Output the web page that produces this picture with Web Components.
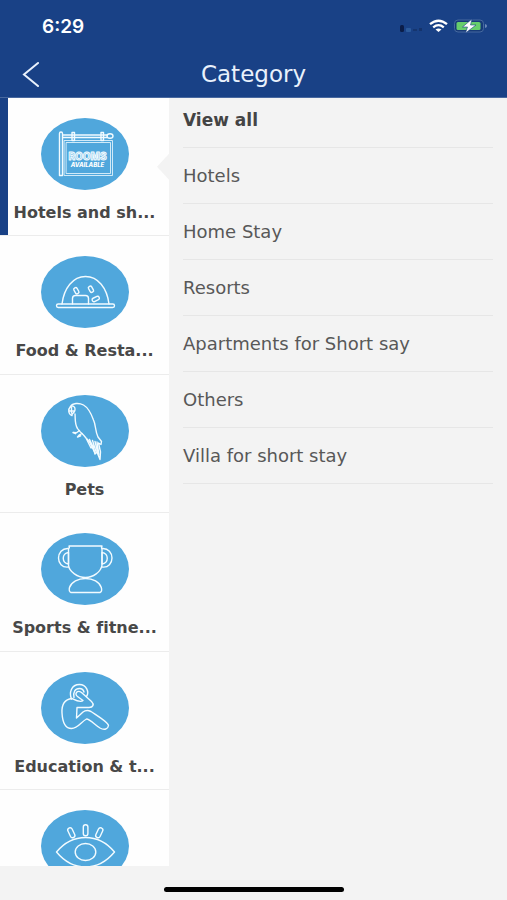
<!DOCTYPE html>
<html lang="en">
<head>
  <meta charset="utf-8">
  <meta name="viewport" content="width=device-width, initial-scale=1">
  <title>Category</title>
  <style>
    body {
      margin: 0;
      font-family: "DejaVu Sans", Verdana, sans-serif;
      font-variant-ligatures: none;
      color: #4a4a4a;
    }
  </style>
</head>
<body>
  <category-screen>
    <status-bar slot="header" time="6:29"></status-bar>
    <title-bar slot="header">Category</title-bar>

    <category-item slot="categories" icon="rooms" selected>Hotels and sh...</category-item>
    <category-item slot="categories" icon="food">Food &amp; Resta...</category-item>
    <category-item slot="categories" icon="parrot">Pets</category-item>
    <category-item slot="categories" icon="trophy">Sports &amp; fitne...</category-item>
    <category-item slot="categories" icon="person">Education &amp; t...</category-item>
    <category-item slot="categories" icon="eye" label="Eye care"></category-item>

    <sub-item strong>View all</sub-item>
    <sub-item>Hotels</sub-item>
    <sub-item>Home Stay</sub-item>
    <sub-item>Resorts</sub-item>
    <sub-item>Apartments for Short say</sub-item>
    <sub-item>Others</sub-item>
    <sub-item>Villa for short stay</sub-item>
  </category-screen>

  <script>
    'use strict';

    // line drawings, all on the same 88x72 oval
    const ICONS = {
      rooms: `
        <path d="M18.5 57.5V15.5a1.5 1.5 0 0 1 3 0V57.5zM21.5 17H66M21.5 19.5H66"/>
        <ellipse cx="69" cy="18" rx="3" ry="2.2"/>
        <path d="M31 14.5h2.5v8H31zM60 14.5h2.5v8H60z"/>
        <path d="M23.5 22.5h48v35h-48zM25.5 24.500h44v31h-44z" stroke-width=".8"/>
        <text x="46.5" y="42" font-family="Inter, sans-serif" font-size="10" font-weight="800" text-anchor="middle" fill="#8cc8ea" stroke-width=".9">ROOMS</text>
        <text x="46.5" y="49" font-family="Inter, sans-serif" font-size="6" font-weight="800" font-style="italic" text-anchor="middle" fill="#fff" stroke="none">AVAILABLE</text>`,
      food: `
        <path d="M21 48C23 32 32 20.5 44.5 20.5S66 32 68 48"/>
        <rect x="15.5" y="48" width="58" height="3.5" rx="1.7"/>
        <path d="M31.5 48v-5.5q0-3 3-3h10q3 0 3 3V48"/>
        <rect x="33.5" y="31.5" width="3.6" height="6.5" rx="1.6" transform="rotate(-30 35.3 34.7)"/>
        <rect x="48.2" y="30" width="3.6" height="6.5" rx="1.6" transform="rotate(-30 50 33.3)"/>
        <rect x="52.9" y="39.2" width="3.6" height="7.5" rx="1.6" transform="rotate(65 54.7 43)"/>`,
      parrot: `
        <path d="M34 19C34.5 24 33.5 29 36.5 33.5C39 37.5 42 39 45 43L50 53L52 51L54 59L56 57L59 64.5L59.5 57L57.5 48L60 49.5L60.5 46.5L57 42C54 36 55 30 52.5 25C50 18 46 12 42.5 10C38 7.5 31.5 8 29.5 11.5"/>
        <path d="M29.5 11.5C26.5 14.5 27.5 19.5 31 20.5C30.5 18 33.5 18.5 34 15C34.5 12 32 10 29.5 11.5zM28.5 16h4.5M30.5 12v6"/>
        <path d="M38.5 35.5l-3 2.3-3.5-.3 2.5 1.2M41 38.5l-2.5 1.3-2 2.2 3.2-1.2"/>
        <path d="M46 44l6 7.5M48.5 44.5l4 8M51.5 45.5l3.5 11M54 46.5l3 12M56 47l2 13M49 48l5 10"/>`,
      trophy: `
        <path d="M28 13H61q-1 1.5 0 3V32C60 39 52 44.5 44.5 44.5S28 39 27.5 32V16q1.5-1.5.5-3z"/>
        <path d="M27.5 15.5C21 15 17.5 20 17.5 25S21 35 27.5 34M61 15.5c6.5-.5 10 4.5 10 9.5S67.5 35 61 34"/>
        <path d="M27.5 19.5c-7 .5-7 11 0 11.5zM61 19.5c7 .5 7 11 0 11.5z"/>
        <path d="M30 59.5q-2.5-1-1.5-5C30.5 49 37 45.5 44.5 45.5S58.5 49 60.3 54.5q1.2 4-1.3 5z"/>`,
      person: `
        <path d="M30.5 27C28 21 30 12.5 38.5 12.5C45.5 12.5 48.5 20 45.5 24.5"/>
        <path d="M31 26.5C23 27.5 20.5 33 21 41C21.5 50 24.5 56.5 30.5 56.5C37 56.5 40 50 45.5 47C49 47 54 53 59 56C63.5 58.5 67 57 67.5 53.5C67 50 55 43 50 39.5C47 38 44 38.5 42 40L35.5 46L36 35.5H48C52 35.5 53.5 32.5 50.5 29.5L40.5 20.5C36 17.5 33 22 36.5 24.5L42 28.5C39.5 31 35 28.5 31 26.5z"/>
        <path d="M33 25.5C32 20 34 16.5 38.5 16.5C41 16.5 42.5 18 43 20"/>`,
      eye: `
        <path d="M15.5 42C23 33 32 27.5 44.5 27.5S66 33 73.5 42C66 51 57 57 44.5 57S23 51 15.5 42z"/>
        <ellipse cx="44.5" cy="42" rx="10.3" ry="8.5"/>
        <rect x="28" y="17.5" width="4.6" height="10.5" rx="2.2" transform="rotate(-25 30.3 22.7)"/>
        <rect x="42.3" y="14.7" width="4.6" height="11" rx="2.2"/>
        <rect x="56" y="17.5" width="4.6" height="10.5" rx="2.2" transform="rotate(25 58.3 22.7)"/>`
    };

    class CategoryScreen extends HTMLElement {
      constructor() {
        super();
        this.attachShadow({ mode: 'open' });
        this.shadowRoot.innerHTML = `
          <style>
            :host {
              display: flex;
              flex-direction: column;
              height: 100vh;
              background: #f3f3f3;
            }

            header {
              background: #194186;
            }

            main {
              flex: 1;
              min-height: 0;
              display: grid;
              grid-template-columns: 1fr 2fr;
              grid-template-rows: 100%;
            }

            nav {
              display: flex;
              flex-direction: column;
              background: #fefefe;
              overflow-y: auto;
              scrollbar-width: none;
            }

            section {
              padding: 0 14px;
              overflow-y: auto;
              scrollbar-width: none;
            }

            footer {
              display: flex;
              justify-content: center;
              padding: 21px 0 8px;
            }

            footer span {
              width: 180px;
              height: 5px;
              border-radius: 3px;
              background: #000000;
            }
          </style>

          <header><slot name="header"></slot></header>
          <main>
            <nav><slot name="categories"></slot></nav>
            <section><slot></slot></section>
          </main>
          <footer><span></span></footer>
        `;
      }
    }

    class StatusBar extends HTMLElement {
      constructor() {
        super();
        this.attachShadow({ mode: 'open' });
        this.shadowRoot.innerHTML = `
          <style>
            :host {
              display: flex;
              align-items: center;
              justify-content: space-between;
              height: 52px;
              padding: 0 20px 0 42px;
              color: #ffffff;
              font: 600 19px Inter, "Liberation Sans", sans-serif;
            }

            div {
              display: flex;
              align-items: center;
              gap: 6px;
            }
          </style>

          <span></span>
          <div>
            <svg width="23" height="14" viewBox="0 0 23 14" aria-hidden="true">
              <rect y="6" width="4" height="7" rx="1.5" fill="#0b1d48"/>
              <rect x="6" y="9" width="5" height="4" rx="1" fill="#2c5b9c"/>
              <rect x="13" y="10" width="4" height="2" fill="#15356f"/>
              <rect x="19" y="9" width="3" height="3" fill="#14336c"/>
            </svg>
            <svg width="19" height="14" viewBox="0 0 19 14" fill="none" stroke="#fff" stroke-width="2.3" aria-hidden="true">
              <path d="M1 5.2Q9.5-1.8 18 5.2M4.2 8.3q5.3-4.3 10.6 0"/>
              <path d="M9.5 13L6.5 10.5q3-2.2 6 0z" fill="#fff" stroke="none"/>
            </svg>
            <svg width="33" height="14" viewBox="0 0 33 14" aria-hidden="true">
              <rect x=".5" y="1" width="29" height="12" rx="3.5" fill="#163a78" stroke="#46699f"/>
              <path d="M31 5q2 .5 2 2t-2 2z" fill="#6c8ab8"/>
              <rect x="2.5" y="3" width="24" height="8" rx="1.5" fill="#67ce6b"/>
              <path d="M18 0L8.5 8H13.500l-2 6L22 6h-5.500z" fill="#fff" stroke="#194186" stroke-width=".6"/>
            </svg>
          </div>
        `;
      }
      connectedCallback() {
        this.shadowRoot.querySelector('span').textContent = this.getAttribute('time');
      }
    }

    class TitleBar extends HTMLElement {
      constructor() {
        super();
        this.attachShadow({ mode: 'open' });
        this.shadowRoot.innerHTML = `
          <style>
            :host {
              display: grid;
              grid-template-columns: 62px 1fr 62px;
              align-items: center;
              height: 46px;
              box-sizing: border-box;
              padding-bottom: 2px;
              border-bottom: 1px solid #48689f;
              color: #e9f1fc;
            }

            button {
              display: flex;
              justify-content: center;
              border: 0;
              padding: 0;
              background: none;
              color: inherit;
            }

            h1 {
              margin: 0;
              font-size: 23px;
              line-height: 28px;
              font-weight: 400;
              text-align: center;
            }
          </style>

          <button type="button" aria-label="Back">
            <svg width="18" height="26" viewBox="0 0 18 26" fill="none" stroke="currentColor" stroke-width="2" stroke-linecap="round">
              <path d="M16 2L2 13.5L16 25"/>
            </svg>
          </button>
          <h1><slot></slot></h1>
        `;
      }
    }

    class CategoryItem extends HTMLElement {
      constructor() {
        super();
        this.attachShadow({ mode: 'open' });
        this.shadowRoot.innerHTML = `
          <style>
            :host {
              display: block;
              flex: 0 0 18.03%;
              position: relative;
              box-sizing: border-box;
              border-bottom: 1px solid #ececec;
            }

            :host([selected]) {
              box-shadow: inset 8px 0 0 #194186;
            }

            /* notch that points at the open category */
            :host([selected])::after {
              content: "";
              position: absolute;
              top: 50%;
              right: 0;
              width: 12px;
              height: 26px;
              margin-top: -13px;
              background: #f3f3f3;
              clip-path: polygon(0 50%, 100% 0, 100% 100%);
            }

            button {
              display: flex;
              flex-direction: column;
              align-items: center;
              gap: 13px;
              width: 100%;
              border: 0;
              padding: 20px 0 0;
              background: none;
              color: #484848;
              font: 700 16px/20px "DejaVu Sans", Verdana, sans-serif;
              font-variant-ligatures: none;
              white-space: nowrap;
            }
          </style>

          <button type="button">
            <svg width="88" height="72" viewBox="0 0 88 72" fill="none" stroke="#f2fbff" stroke-width="1.4" stroke-linejoin="round" stroke-linecap="round" aria-hidden="true"></svg>
            <span><slot></slot></span>
          </button>
        `;
      }
      connectedCallback() {
        const svg = this.shadowRoot.querySelector('svg');
        svg.innerHTML = '<ellipse cx="44" cy="36" rx="44" ry="36" fill="#50a7dc" stroke="none"/>' + ICONS[this.getAttribute('icon')];
        if (this.hasAttribute('label')) {
          this.shadowRoot.querySelector('button').setAttribute('aria-label', this.getAttribute('label'));
        }
      }
    }

    class SubItem extends HTMLElement {
      constructor() {
        super();
        this.attachShadow({ mode: 'open' });
        this.shadowRoot.innerHTML = `
          <style>
            :host {
              display: block;
              border-bottom: 1px solid #e6e6e6;
            }

            a {
              display: block;
              padding: 18px 0 17px;
              color: #585858;
              font-size: 18px;
              line-height: 20px;
              text-decoration: none;
            }

            :host([strong]) a {
              padding-top: 12px;
              color: #444444;
              font-size: 17px;
              font-weight: 700;
            }
          </style>

          <a href="#"><slot></slot></a>
        `;
      }
    }

    window.customElements.define('category-screen', CategoryScreen);
    window.customElements.define('status-bar', StatusBar);
    window.customElements.define('title-bar', TitleBar);
    window.customElements.define('category-item', CategoryItem);
    window.customElements.define('sub-item', SubItem);
  </script>
</body>
</html>
